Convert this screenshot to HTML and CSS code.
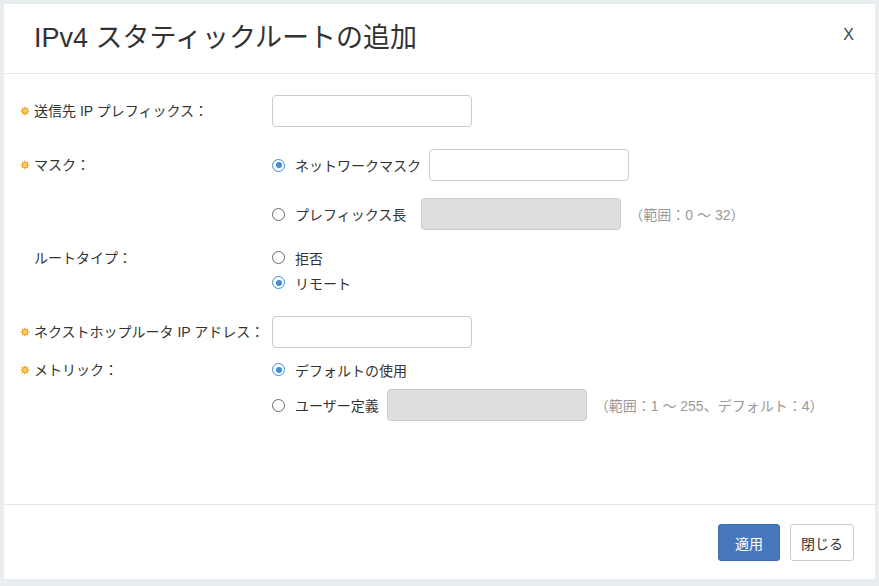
FILE: index.html
```html
<!DOCTYPE html>
<html lang="ja">
<head>
    <meta charset="UTF-8">
    <meta name="viewport" content="width=device-width, initial-scale=1.0">
    <title>IPv4 スタティックルートの追加</title>
    <link rel="stylesheet" href="styles.css">
</head>
<body>

    <div class="modal">
        <div class="modal-header">
            <h1 class="modal-title">IPv4 スタティックルートの追加</h1>
            <span class="close">X</span>
        </div>

        <div class="modal-body">
            <!-- destination prefix -->
            <div class="field field-prefix">
                <div class="field-label">
                    <svg class="req" viewBox="0 0 10 10"><polygon points="5,0 6.07,2.41 8.54,1.46 7.59,3.93 10,5 7.59,6.07 8.54,8.54 6.07,7.59 5,10 3.93,7.59 1.46,8.54 2.41,6.07 0,5 2.41,3.93 1.46,1.46 3.93,2.41" fill="#f0a01e"/><circle cx="5" cy="5" r="2" fill="#fcd36a"/></svg>
                    送信先 IP プレフィックス：
                </div>
                <div class="field-controls">
                    <div class="option"><input class="text-input" type="text"></div>
                </div>
            </div>

            <!-- mask -->
            <div class="field field-mask">
                <div class="field-label">
                    <svg class="req" viewBox="0 0 10 10"><polygon points="5,0 6.07,2.41 8.54,1.46 7.59,3.93 10,5 7.59,6.07 8.54,8.54 6.07,7.59 5,10 3.93,7.59 1.46,8.54 2.41,6.07 0,5 2.41,3.93 1.46,1.46 3.93,2.41" fill="#f0a01e"/><circle cx="5" cy="5" r="2" fill="#fcd36a"/></svg>
                    マスク：
                </div>
                <div class="field-controls">
                    <div class="option">
                        <span class="radio checked"></span>ネットワークマスク
                        <input class="text-input" type="text">
                    </div>
                    <div class="option option-second">
                        <span class="radio"></span>プレフィックス長
                        <input class="text-input text-input-wide-gap" type="text" disabled>
                        <span class="hint">（範囲：0 ～ 32）</span>
                    </div>
                </div>
            </div>

            <!-- route type -->
            <div class="field field-route">
                <div class="field-label field-label-short">
                    <span class="req-space"></span>
                    ルートタイプ：
                </div>
                <div class="field-controls">
                    <div class="option option-short"><span class="radio"></span>拒否</div>
                    <div class="option option-short"><span class="radio checked"></span>リモート</div>
                </div>
            </div>

            <!-- next hop -->
            <div class="field field-nexthop">
                <div class="field-label">
                    <svg class="req" viewBox="0 0 10 10"><polygon points="5,0 6.07,2.41 8.54,1.46 7.59,3.93 10,5 7.59,6.07 8.54,8.54 6.07,7.59 5,10 3.93,7.59 1.46,8.54 2.41,6.07 0,5 2.41,3.93 1.46,1.46 3.93,2.41" fill="#f0a01e"/><circle cx="5" cy="5" r="2" fill="#fcd36a"/></svg>
                    ネクストホップルータ IP アドレス：
                </div>
                <div class="field-controls">
                    <div class="option"><input class="text-input" type="text"></div>
                </div>
            </div>

            <!-- metric -->
            <div class="field">
                <div class="field-label field-label-short">
                    <svg class="req" viewBox="0 0 10 10"><polygon points="5,0 6.07,2.41 8.54,1.46 7.59,3.93 10,5 7.59,6.07 8.54,8.54 6.07,7.59 5,10 3.93,7.59 1.46,8.54 2.41,6.07 0,5 2.41,3.93 1.46,1.46 3.93,2.41" fill="#f0a01e"/><circle cx="5" cy="5" r="2" fill="#fcd36a"/></svg>
                    メトリック：
                </div>
                <div class="field-controls">
                    <div class="option option-short"><span class="radio checked"></span>デフォルトの使用</div>
                    <div class="option option-metric">
                        <span class="radio"></span>ユーザー定義
                        <input class="text-input" type="text" disabled>
                        <span class="hint">（範囲：1 ～ 255、デフォルト：4）</span>
                    </div>
                </div>
            </div>
        </div>

        <div class="modal-footer">
            <button class="btn btn-primary">適用</button>
            <button class="btn">閉じる</button>
        </div>
    </div>

</body>
</html>
```

FILE: styles.css
```css
body {
    margin: 0;
    padding: 4px;
    background: #e8edf0;
    font-family: "Liberation Sans", "Noto Sans CJK JP", sans-serif;
    font-size: 14px;
    color: #333;
}
.modal {
    width: 871px;
    height: 575px;
    background: #fff;
    display: flex;
    flex-direction: column;
}
.modal-header {
    height: 69px;
    border-bottom: 1px solid #e5e5e5;
    display: flex;
    align-items: center;
    justify-content: space-between;
    padding: 0 21px 0 30px;
}
.modal-title {
    margin: 0;
    font-size: 27px;
    font-weight: normal;
    line-height: 1;
    color: #333;
}
.close {
    font-size: 16px;
    color: #444;
    margin-bottom: 8px;
}
.modal-body {
    flex: 1;
    padding: 21px 20px 0 16px;
}
.field {
    display: flex;
}
.field-prefix {
    margin-bottom: 22px;
}
.field-mask {
    margin-bottom: 15px;
}
.field-route {
    margin-bottom: 21px;
}
.field-nexthop {
    margin-bottom: 9px;
}
.field-label {
    width: 252px;
    flex-shrink: 0;
    height: 32px;
    display: flex;
    align-items: center;
    line-height: 20px;
    white-space: nowrap;
}
.field-label-short {
    height: 25px;
}
.req {
    width: 10px;
    height: 10px;
    margin-right: 4px;
}
.req-space {
    width: 14px;
}
.field-controls {
    display: flex;
    flex-direction: column;
}
.option {
    height: 32px;
    display: flex;
    align-items: center;
    white-space: nowrap;
}
.option-short {
    height: 25px;
}
.option-second {
    margin-top: 17px;
}
.option-metric {
    margin-top: 7px;
}
.radio {
    width: 13px;
    height: 13px;
    box-sizing: border-box;
    border: 1px solid #6b6b6b;
    border-radius: 50%;
    margin: 0 10px 0 0;
    position: relative;
    flex-shrink: 0;
}
.radio.checked {
    border-color: #3d8ddb;
}
.radio.checked::after {
    content: "";
    position: absolute;
    left: 2.5px;
    top: 2.5px;
    width: 6px;
    height: 6px;
    border-radius: 50%;
    background: #3d8ddb;
}
.text-input {
    width: 200px;
    height: 32px;
    box-sizing: border-box;
    border: 1px solid #ccc;
    border-radius: 4px;
    margin: 0;
    padding: 4px 8px;
    font: inherit;
    background: #fff;
}
.option .text-input {
    margin-left: 8px;
}
.option .text-input-wide-gap {
    margin-left: 15px;
}
.option:first-child > .text-input:first-child {
    margin-left: 0;
}
.text-input:disabled {
    background: #dedede;
}
.hint {
    color: #999;
    margin-left: 8px;
}
.modal-footer {
    border-top: 1px solid #e5e5e5;
    padding: 19px 21px 18px 0;
    display: flex;
    justify-content: flex-end;
    gap: 10px;
}
.btn {
    height: 37px;
    min-width: 62px;
    box-sizing: border-box;
    padding: 0 10px;
    border: 1px solid #ccc;
    border-radius: 3px;
    background: #fff;
    color: #333;
    font: inherit;
    cursor: pointer;
}
.btn-primary {
    background: #4778bb;
    border-color: #3f6eae;
    color: #fff;
}
```
